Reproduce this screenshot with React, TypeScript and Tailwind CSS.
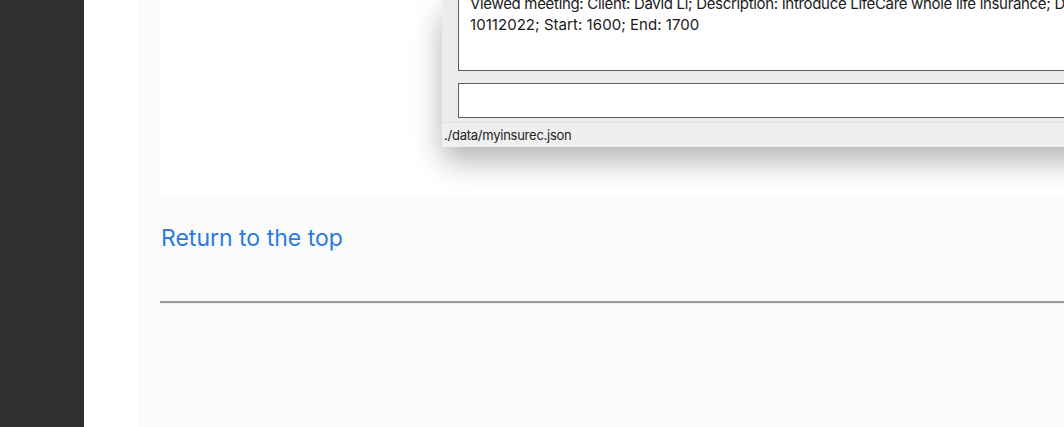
export default function App() {
  return (
    <div className="flex h-[427px] w-[1064px] overflow-hidden bg-white">
      <aside className="w-[84px] shrink-0 bg-[#303030]" />
      <div className="w-[54px] shrink-0 bg-white" />
      <main className="flex-1 bg-[#fbfbfb] pl-[22px]">
        {/* screenshot of the desktop app */}
        <div className="h-[197px] w-[1000px] overflow-hidden bg-white">
          <div className="ml-[282px] flex h-[147px] flex-col rounded-bl-[10px] bg-[#ececec] shadow-[0_14px_30px_rgba(0,0,0,0.3)]">
            <div className="px-[16px]">
              <div className="h-[71px] overflow-hidden border border-t-0 border-[#5c5c5c] bg-white">
                <div className="-mt-[7px] pl-[11px] font-['Inter',sans-serif] text-[15px] leading-[21px] text-[#1a1a1a]">
                  <p className="whitespace-nowrap tracking-[-0.32px]">
                    Viewed meeting: Client: David Li; Description: Introduce LifeCare whole life insurance; Date:
                  </p>
                  <p className="tracking-[0.05px]">10112022; Start: 1600; End: 1700</p>
                </div>
              </div>
              <div className="mt-[12px] h-[35px] border border-[#5c5c5c] bg-white" />
            </div>
            <div className="mt-[4px] flex flex-1 items-center border-t border-[#e2e2e2] bg-[#efefef] pt-[2px] pl-[2px] font-['Inter',sans-serif] text-[13px] tracking-[-0.25px] text-[#222]">
              ./data/myinsurec.json
            </div>
          </div>
        </div>

        <a
          href="#top"
          className="mt-[24px] ml-[1px] block font-['Inter',sans-serif] text-[23px] leading-[34px] text-[#2a7ae2]"
        >
          Return to the top
        </a>

        <hr className="mt-[46px] border-0 border-t-2 border-b border-t-[#9a9a9a] border-b-[#ececec]" />
      </main>
    </div>
  );
}
